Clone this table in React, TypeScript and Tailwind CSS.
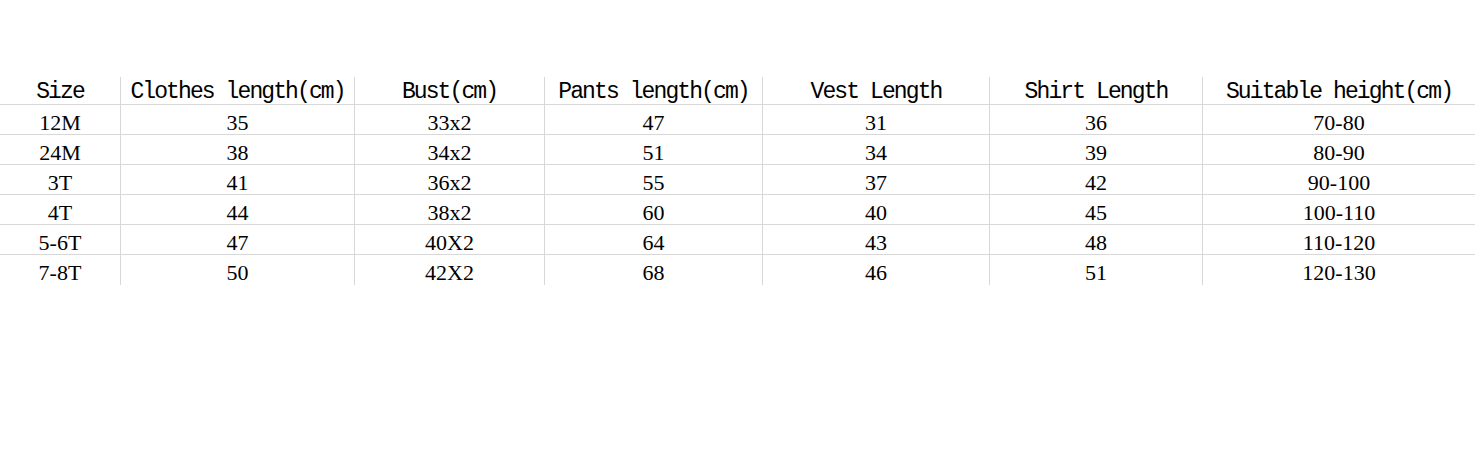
const headers = [
  'Size',
  'Clothes length(cm)',
  'Bust(cm)',
  'Pants length(cm)',
  'Vest Length',
  'Shirt Length',
  'Suitable height(cm)',
];

const rows = [
  ['12M', '35', '33x2', '47', '31', '36', '70-80'],
  ['24M', '38', '34x2', '51', '34', '39', '80-90'],
  ['3T', '41', '36x2', '55', '37', '42', '90-100'],
  ['4T', '44', '38x2', '60', '40', '45', '100-110'],
  ['5-6T', '47', '40X2', '64', '43', '48', '110-120'],
  ['7-8T', '50', '42X2', '68', '46', '51', '120-130'],
];

export default function App() {
  return (
    <div className="w-[1476px] h-[449px] bg-white pt-[77px] overflow-hidden">
      <div className="grid w-[1475px] grid-cols-[120px_234px_190px_218px_227px_213px_273px] text-black">
        {headers.map((h, i) => (
          <div
            key={h}
            className={`h-[28px] flex items-center justify-center pt-[3px] border-b border-[#d8d8d8] font-['Liberation_Mono',monospace] text-[23px] leading-none tracking-[-1.9px] whitespace-nowrap ${i > 0 ? 'border-l' : ''}`}
          >
            {h}
          </div>
        ))}
        {rows.map((row, r) =>
          row.map((cell, i) => (
            <div
              key={`${r}-${i}`}
              className={`h-[30px] flex items-center justify-center pt-[6px] font-['Liberation_Serif',serif] text-[22px] leading-none whitespace-nowrap border-[#d8d8d8] ${i > 0 ? 'border-l' : ''} ${r < rows.length - 1 ? 'border-b' : ''}`}
            >
              {cell}
            </div>
          ))
        )}
      </div>
    </div>
  );
}
